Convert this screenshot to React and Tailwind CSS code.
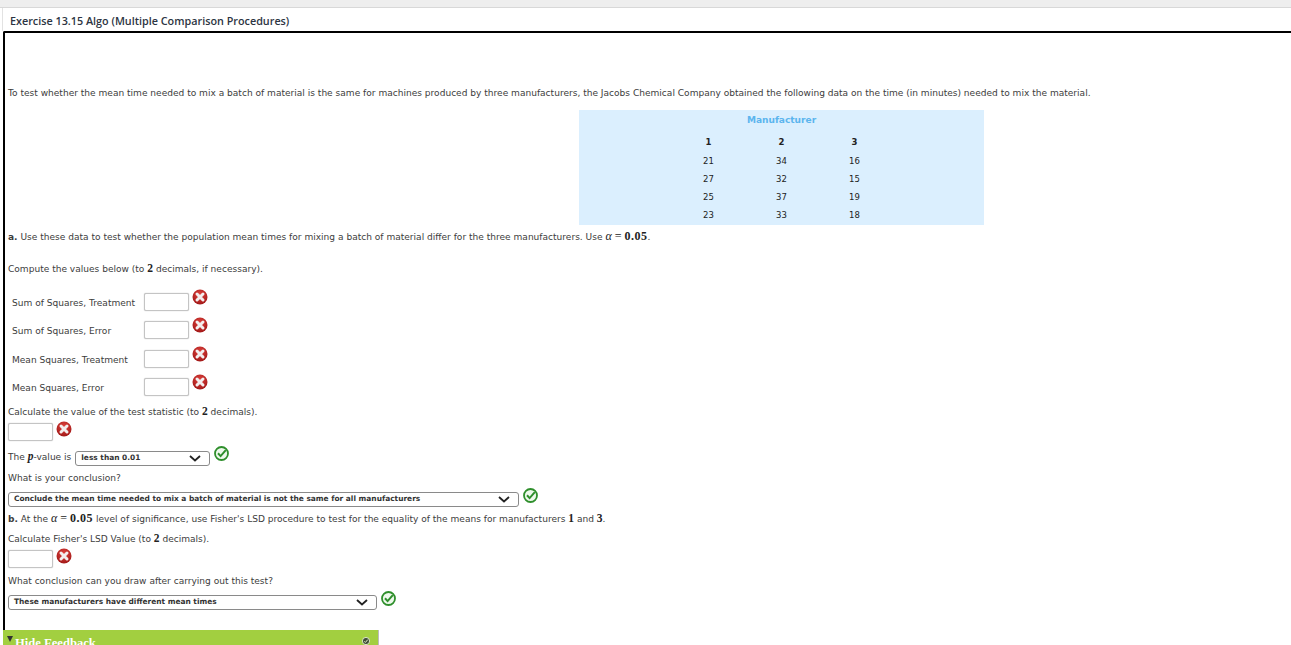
const verdana = "font-['DejaVu_Sans','Liberation_Sans',sans-serif]"

function WrongIcon() {
    return (
        <svg width="16" height="16" viewBox="0 0 16 16" className="shrink-0">
            <defs>
                <radialGradient id="wrongFill" cx="50%" cy="35%" r="70%">
                    <stop offset="0%" stopColor="#e2453f" />
                    <stop offset="100%" stopColor="#9c1414" />
                </radialGradient>
            </defs>
            <circle cx="8" cy="8" r="7.5" fill="url(#wrongFill)" />
            <path d="M5 5l6 6M11 5l-6 6" stroke="#f3eeee" strokeWidth="3" strokeLinecap="round" />
        </svg>
    )
}

function RightIcon() {
    return (
        <svg width="15" height="15" viewBox="0 0 15 15" className="shrink-0">
            <circle cx="7.5" cy="7.5" r="6.5" fill="#eef9ec" stroke="#2f8f2c" strokeWidth="1.8" />
            <path d="M4 7.3l2.6 2.8L11.8 4.2" fill="none" stroke="#2f8f2c" strokeWidth="2" />
        </svg>
    )
}

function Chevron() {
    return (
        <svg width="12" height="7" viewBox="0 0 12 7" className="shrink-0">
            <path d="M1 1l5 4.5L11 1" fill="none" stroke="#222" strokeWidth="1.8" />
        </svg>
    )
}

function Num({ children }) {
    return <span className="font-['Liberation_Serif',serif] font-bold text-[11.5px] text-[#222]">{children}</span>
}

function Alpha() {
    return (
        <span className="font-['Liberation_Serif',serif] text-[12px] text-[#222]">
            <i>α</i><span className="mx-[3px]">=</span><b className="tracking-[0.5px]">0.05</b>
        </span>
    )
}

function TextInput() {
    return <div className="w-[45px] h-[18px] shrink-0 bg-white border border-[#c4c4c4] rounded-[2px] shadow-[0_0_1px_#aaa]" />
}

function Dropdown({ width, text }) {
    return (
        <div className={`${width} h-[15px] shrink-0 flex items-center justify-between pl-[5px] pr-[8px] bg-white border border-[#8a8a8a] rounded-[3px] font-bold text-[7.45px] text-[#333]`}>
            <span>{text}</span>
            <Chevron />
        </div>
    )
}

function ScoreRow({ label, className }) {
    return (
        <div className={`flex items-start h-[18px] ${className}`}>
            <span className="w-[136px] pl-[4px] pt-[4px] h-[18px] flex items-center">{label}</span>
            <TextInput />
            <span className="ml-[3px] -mt-[4px]"><WrongIcon /></span>
        </div>
    )
}

const rows = [
    [21, 34, 16],
    [27, 32, 15],
    [25, 37, 19],
    [23, 33, 18],
]

export default function App() {
    return (
        <div className={`h-[645px] overflow-hidden bg-white text-[9.05px] text-[#3c3c3c] ${verdana}`}>
            <div className="h-[8px] bg-[#eeeeee] border-b border-[#d8d8d8]" />
            <div className="h-[23px] pl-[7px] pt-[4px] flex items-center border-l border-[#e2e2e2] ml-[2px] font-['Open_Sans',sans-serif] font-semibold text-[10.8px] text-[#2c3442]">
                Exercise 13.15 Algo (Multiple Comparison Procedures)
            </div>
            <div className="ml-[3px] pl-[3px] border-l-2 border-t-2 border-black rounded-tl-[2px] h-[620px]">
                <div className="mt-[52px] h-[18px] flex items-center">
                    To test whether the mean time needed to mix a batch of material is the same for machines produced by three manufacturers, the Jacobs Chemical Company obtained the following data on the time (in minutes) needed to mix the material.
                </div>

                <div className="mt-[7px] ml-[571px] w-[405px] h-[115px] bg-[#dbeffe] flex flex-col items-center">
                    <div className="h-[19px] pt-[2px] flex items-center font-bold text-[#5bb5ee]">Manufacturer</div>
                    <table className="w-[219px] text-center text-[8.5px] text-[#222] table-fixed">
                        <thead>
                            <tr className="h-[23px] font-bold"><th className="pt-[3px]">1</th><th className="pt-[3px]">2</th><th className="pt-[3px]">3</th></tr>
                        </thead>
                        <tbody>
                            {rows.map((row) => (
                                <tr key={row[0]} className="h-[18px]">
                                    {row.map((v, i) => <td key={i}>{v}</td>)}
                                </tr>
                            ))}
                        </tbody>
                    </table>
                </div>

                <div className="mt-[2px] h-[18px] flex items-center">
                    <span><b>a.</b> Use these data to test whether the population mean times for mixing a batch of material differ for the three manufacturers. Use <Alpha />.</span>
                </div>
                <div className="mt-[15px] h-[18px] flex items-center">
                    <span>Compute the values below (to <Num>2</Num> decimals, if necessary).</span>
                </div>

                <ScoreRow label="Sum of Squares, Treatment" className="mt-[15px]" />
                <ScoreRow label="Sum of Squares, Error" className="mt-[10px]" />
                <ScoreRow label="Mean Squares, Treatment" className="mt-[11px]" />
                <ScoreRow label="Mean Squares, Error" className="mt-[10px]" />

                <div className="mt-[7px] h-[18px] flex items-center">
                    <span>Calculate the value of the test statistic (to <Num>2</Num> decimals).</span>
                </div>
                <div className="mt-[2px] h-[18px] flex items-start">
                    <TextInput />
                    <span className="ml-[3px] -mt-[2px]"><WrongIcon /></span>
                </div>

                <div className="mt-[7px] h-[18px] flex items-center">
                    <span>The <Num><i>p</i></Num>-value is</span>
                    <span className="ml-[4px] translate-y-[1px]"><Dropdown width="w-[135px]" text="less than 0.01" /></span>
                    <span className="ml-[4px] -translate-y-[4px]"><RightIcon /></span>
                </div>
                <div className="mt-[4px] h-[18px] flex items-center">What is your conclusion?</div>
                <div className="mt-[2px] h-[18px] flex items-center">
                    <Dropdown width="w-[511px]" text="Conclude the mean time needed to mix a batch of material is not the same for all manufacturers" />
                    <span className="ml-[4px] -translate-y-[4px]"><RightIcon /></span>
                </div>
                <div className="mt-[1px] h-[18px] flex items-center">
                    <span><b>b.</b> At the <Alpha /> level of significance, use Fisher's LSD procedure to test for the equality of the means for manufacturers <Num>1</Num> and <Num>3</Num>.</span>
                </div>
                <div className="mt-[3px] h-[18px] flex items-center">
                    <span>Calculate Fisher's LSD Value (to <Num>2</Num> decimals).</span>
                </div>
                <div className="mt-[2px] h-[18px] flex items-start">
                    <TextInput />
                    <span className="ml-[3px] -mt-[2px]"><WrongIcon /></span>
                </div>
                <div className="mt-[5px] h-[18px] flex items-center">What conclusion can you draw after carrying out this test?</div>
                <div className="mt-[2px] h-[18px] flex items-center">
                    <Dropdown width="w-[369px]" text="These manufacturers have different mean times" />
                    <span className="ml-[4px] -translate-y-[4px]"><RightIcon /></span>
                </div>

                <div className="-ml-[5px] mt-[19px] w-[376px] h-[30px] bg-[#a2cf40] border-r border-[#bbbbbb] relative font-['Liberation_Serif',serif] font-bold text-[12.6px] text-white">
                    <span className="absolute left-[4px] top-[6px] w-0 h-0 border-x-[3px] border-x-transparent border-t-[6px] border-t-[#333]" />
                    <span className="absolute left-[12px] top-[4px]">Hide Feedback</span>
                    <svg width="8" height="8" viewBox="0 0 8 8" className="absolute left-[359px] top-[7px]">
                        <circle cx="4" cy="4" r="3.6" fill="#3f4f36" stroke="#f4f7ea" strokeWidth="0.8" />
                        <path d="M2.4 4.4l1 1L5.8 2.6" fill="none" stroke="#e9f2d2" strokeWidth="1" />
                    </svg>
                </div>
            </div>
        </div>
    )
}
